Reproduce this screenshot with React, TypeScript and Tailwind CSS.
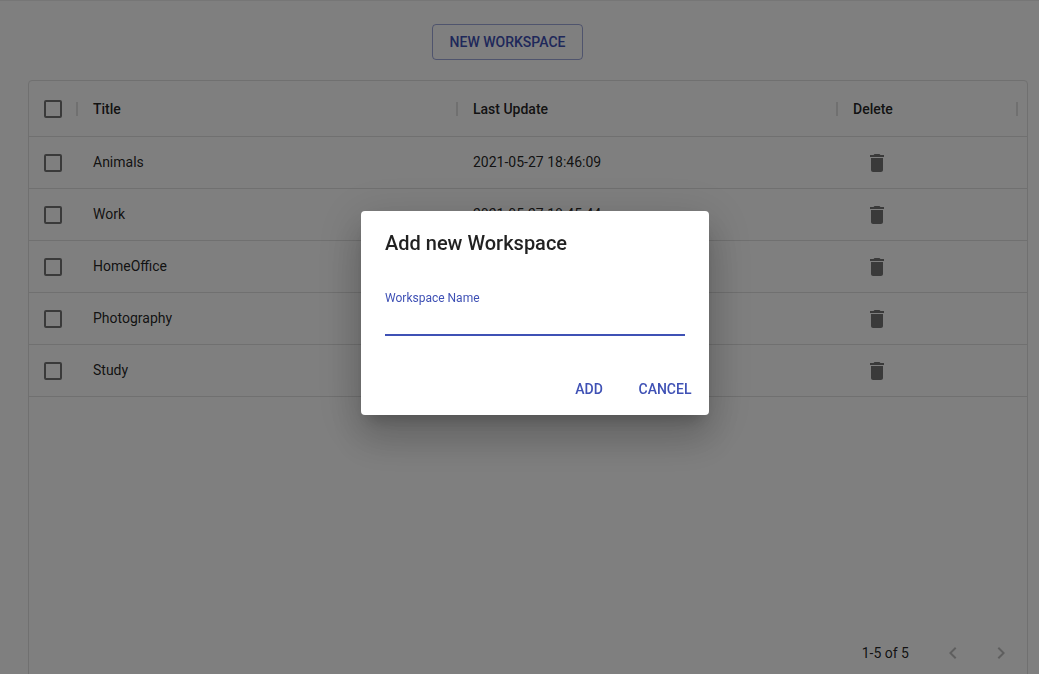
import { useState } from "react";
import { MdDelete, MdKeyboardArrowLeft, MdKeyboardArrowRight } from "react-icons/md";

type Workspace = { title: string; updated: string };

const workspaces: Workspace[] = [
  { title: "Animals", updated: "2021-05-27 18:46:09" },
  { title: "Work", updated: "2021-05-27 18:45:44" },
  { title: "HomeOffice", updated: "2021-05-27 18:45:31" },
  { title: "Photography", updated: "2021-05-27 18:45:20" },
  { title: "Study", updated: "2021-05-27 18:45:02" },
];

function Checkbox({ label }: { label: string }) {
  return (
    <input
      type="checkbox"
      aria-label={label}
      className="block size-[18px] appearance-none rounded-[2px] border-2 border-black/54 checked:bg-[#3f51b5]"
    />
  );
}

function HeaderCell({ children }: { children: string }) {
  return (
    <th scope="col" className="relative h-[55px] px-4 pt-0.5 text-left font-medium">
      {children}
      <Separator />
    </th>
  );
}

function Separator() {
  return <span className="absolute top-[21px] -right-px h-3.5 w-0.5 bg-[#e0e0e0]" />;
}

function WorkspaceTable() {
  return (
    <table className="w-full table-fixed border-collapse text-sm text-black/87">
      <colgroup>
        <col className="w-12" />
        <col className="w-[380px]" />
        <col className="w-[380px]" />
        <col className="w-[180px]" />
        <col />
      </colgroup>
      <thead>
        <tr className="border-b border-[#e0e0e0]">
          <th scope="col" className="relative pt-0.5 pl-[15px]">
            <Checkbox label="Select all workspaces" />
            <Separator />
          </th>
          <HeaderCell>Title</HeaderCell>
          <HeaderCell>Last Update</HeaderCell>
          <HeaderCell>Delete</HeaderCell>
          <td />
        </tr>
      </thead>
      <tbody>
        {workspaces.map((w) => (
          <tr key={w.title} className="h-13 border-b border-[#e0e0e0]">
            <td className="pt-0.5 pl-[15px]">
              <Checkbox label={`Select ${w.title}`} />
            </td>
            <td className="px-4">{w.title}</td>
            <td className="px-4">{w.updated}</td>
            <td className="px-4 pt-0.5">
              <button
                type="button"
                aria-label={`Delete ${w.title}`}
                className="flex w-12 items-center justify-center text-black/54"
              >
                <MdDelete size={24} />
              </button>
            </td>
            <td />
          </tr>
        ))}
      </tbody>
    </table>
  );
}

function AddDialog({ onClose }: { onClose: () => void }) {
  return (
    <div className="fixed inset-0 flex items-center justify-center bg-black/50 pb-12 pl-[31px]">
      <form
        role="dialog"
        aria-modal="true"
        aria-labelledby="dialog-title"
        onSubmit={(e) => {
          e.preventDefault();
          onClose();
        }}
        className="w-[348px] rounded bg-white shadow-[0_11px_15px_-7px_rgba(0,0,0,0.2),0_24px_38px_3px_rgba(0,0,0,0.14),0_9px_46px_8px_rgba(0,0,0,0.12)]"
      >
        <h2 id="dialog-title" className="px-6 py-4 text-xl leading-8 font-medium text-black/87">
          Add new Workspace
        </h2>
        <div className="px-6 pt-[15px] pb-[27px]">
          <label htmlFor="workspace-name" className="block text-xs leading-4 text-[#3f51b5]">
            Workspace Name
          </label>
          <input
            id="workspace-name"
            type="text"
            className="block h-[30px] w-full border-b-2 border-[#3f51b5] text-base text-black/87 outline-none"
          />
        </div>
        <div className="flex justify-end gap-2 p-2 text-sm font-medium text-[#3f51b5]">
          <button type="submit" className="h-9 min-w-16 rounded px-2 uppercase">
            Add
          </button>
          <button type="button" onClick={onClose} className="h-9 min-w-18 rounded px-2 uppercase">
            Cancel
          </button>
        </div>
      </form>
    </div>
  );
}

export default function App() {
  const [open, setOpen] = useState(true);
  return (
    <div className="h-screen overflow-hidden bg-white font-[Roboto,sans-serif]">
      <main className="flex flex-col border-t border-[#ececec] pr-[11px] pl-7">
        <div className="flex justify-center pt-[23px] pr-[41px] pb-5">
          <button
            type="button"
            onClick={() => setOpen(true)}
            className="h-9 rounded border border-[#3f51b5]/50 px-[17px] text-sm font-medium text-[#3f51b5] uppercase"
          >
            New Workspace
          </button>
        </div>
        <section className="flex min-h-[600px] flex-col rounded border border-[#e0e0e0]">
          <WorkspaceTable />
          <footer className="mt-auto flex h-13 items-center justify-end pr-0.5 text-sm text-black/87">
            <span className="mr-5">1-5 of 5</span>
            <button
              type="button"
              disabled
              aria-label="Previous page"
              className="flex size-12 items-center justify-center text-black/26"
            >
              <MdKeyboardArrowLeft size={24} />
            </button>
            <button
              type="button"
              disabled
              aria-label="Next page"
              className="flex size-12 items-center justify-center text-black/26"
            >
              <MdKeyboardArrowRight size={24} />
            </button>
          </footer>
        </section>
      </main>
      {open && <AddDialog onClose={() => setOpen(false)} />}
    </div>
  );
}
